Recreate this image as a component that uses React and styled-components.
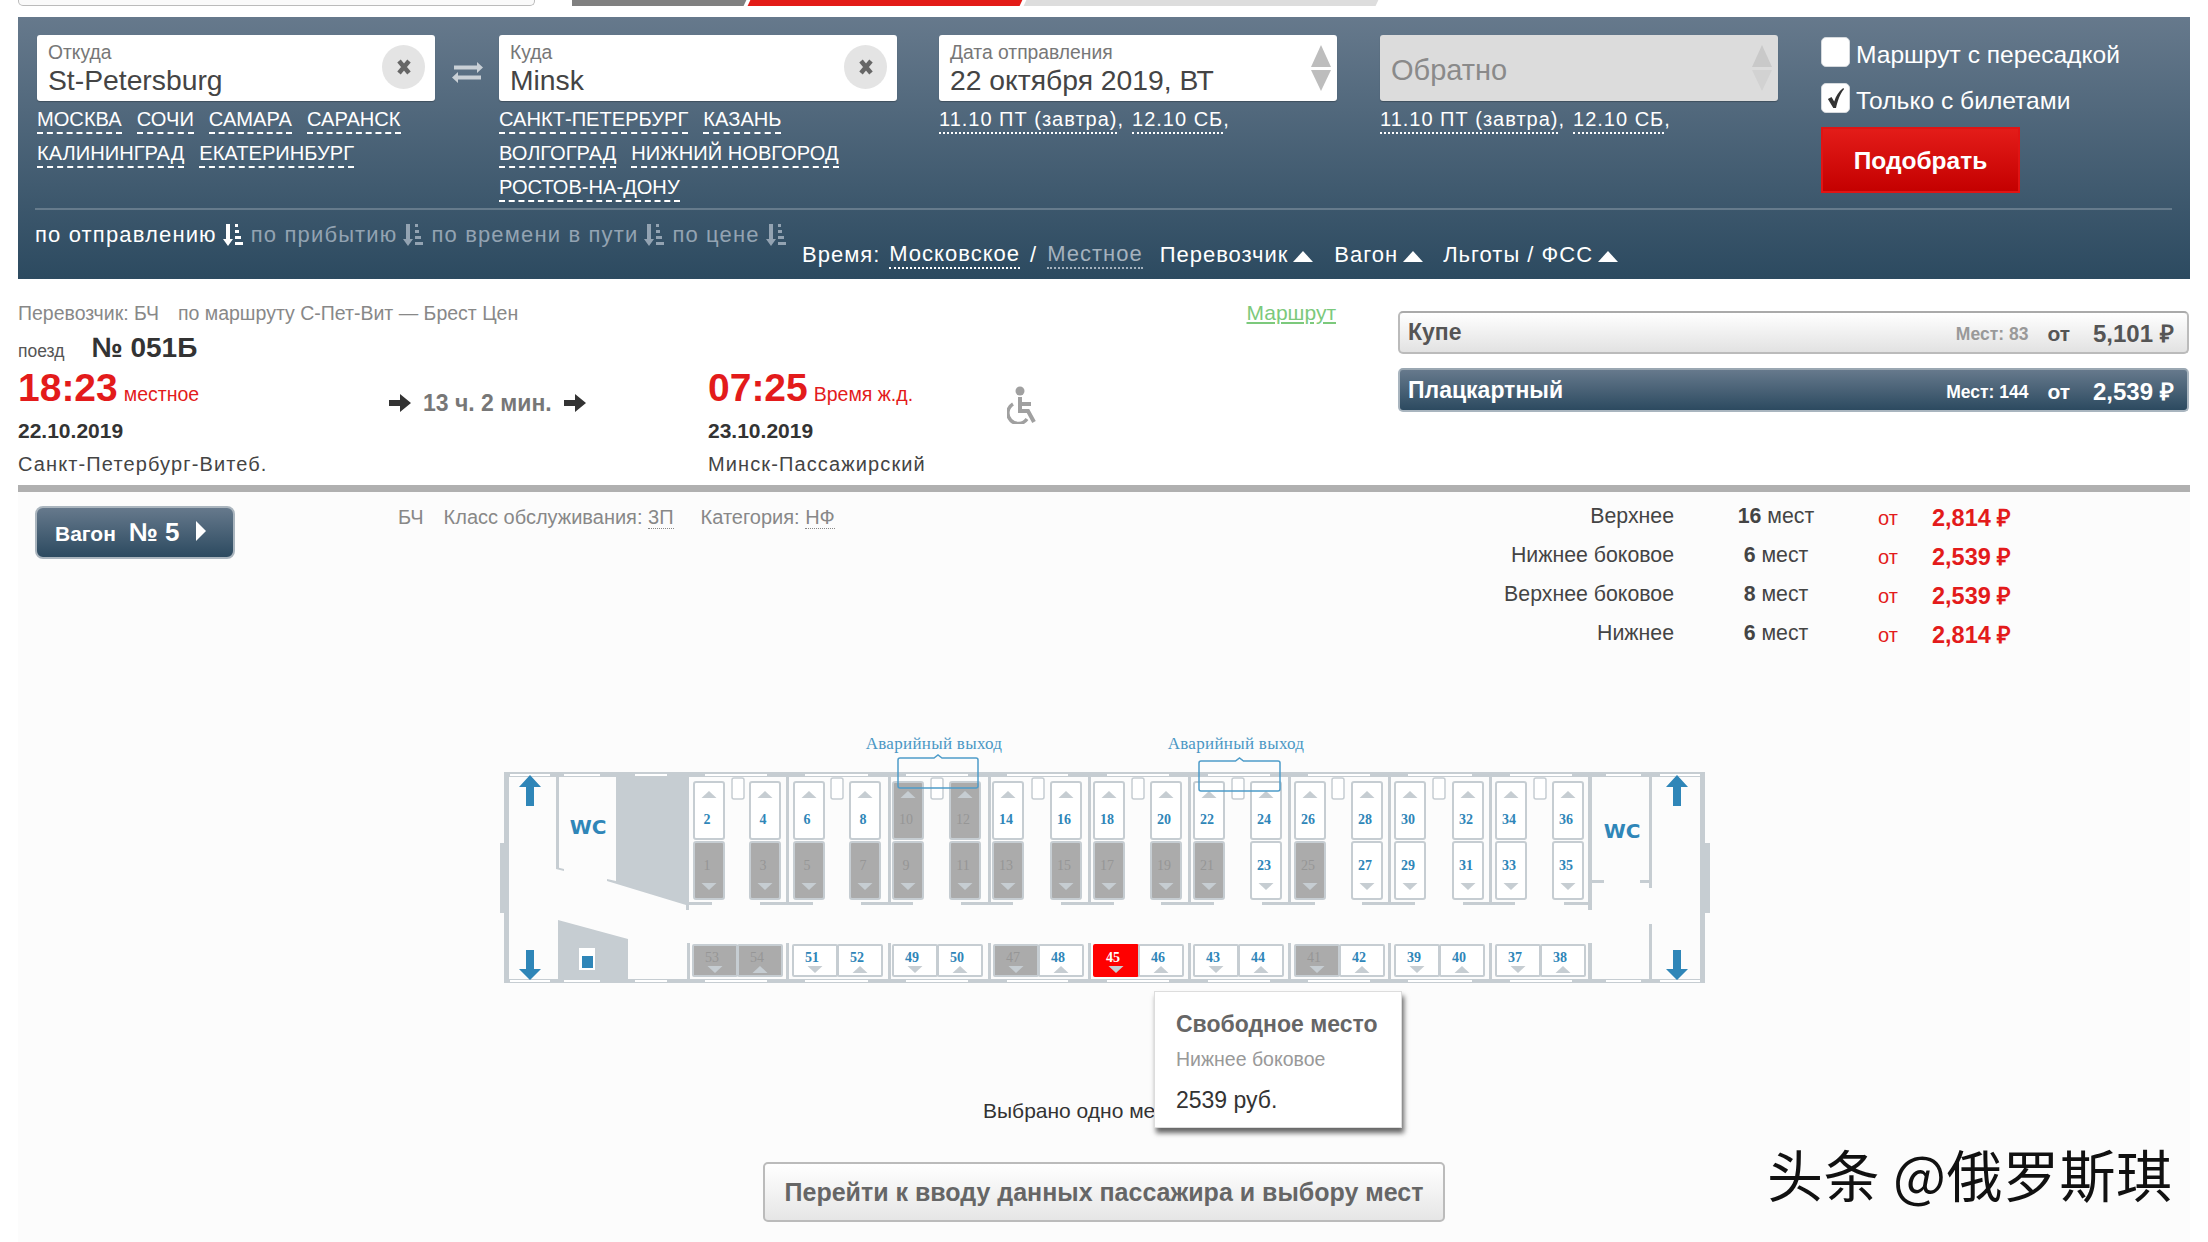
import React from "react";
import styled, { createGlobalStyle } from "styled-components";

const WALL = "#c6cdd2";
const BLUE = "#2f86b8";
const RED = "#e31b1b";

const GlobalStyle = createGlobalStyle`
  html, body {
    margin: 0;
    background: #fff;
    font-family: "Liberation Sans", Arial, sans-serif;
  }
`;

const Page = styled.div`
  position: relative;
  width: 2208px;
  height: 1242px;
  overflow: hidden;
`;

/* обрезанная шапка сверху */
const TopStrip = styled.div`
  display: flex;
  height: 17px;
  padding-left: 18px;
`;

const InputStub = styled.div`
  width: 515px;
  height: 5px;
  background: #fafafa;
  border: 1px solid #bbb;
  border-top: 0;
  border-radius: 0 0 5px 5px;
`;

const Progress = styled.div`
  display: flex;
  gap: 4px;
  width: 810px;
  height: 6px;
  margin-left: 37px;
  overflow: hidden;
`;

const ProgressPart = styled.div`
  flex: none;
  width: ${(p) => p.$w}px;
  margin-left: ${(p) => p.$ml ?? 0}px;
  background: ${(p) => p.$c};
  transform: skewX(-25deg);
`;

const SearchPanel = styled.div`
  margin: 0 18px;
  height: 262px;
  box-sizing: border-box;
  padding: 18px 18px 0 19px;
  background: linear-gradient(#66798c, #2c4a60);
  color: #fff;
`;

const FormRow = styled.div`
  display: flex;
  height: 173px;
`;

const FieldColumn = styled.div`
  width: 398px;
  margin-right: ${(p) => p.$gap}px;
`;

const Field = styled.div`
  position: relative;
  height: 66px;
  box-sizing: border-box;
  padding: 8px 11px 0;
  background: ${(p) => (p.$disabled ? "#dcdcdc" : "#fff")};
  border-radius: 3px;
  box-shadow: 0 1px 1px rgba(0, 0, 0, 0.25);
`;

const FieldLabel = styled.div`
  font-size: 19.3px;
  line-height: 20px;
  color: #777;
`;

const FieldValue = styled.div`
  font-size: 28.3px;
  line-height: 34px;
  color: #444;
`;

const FieldPlaceholder = styled.div`
  padding-top: 10px;
  font-size: 29px;
  line-height: 34px;
  color: #8a8a8a;
`;

const ClearButton = styled.div`
  position: absolute;
  right: 10px;
  top: 10px;
  width: 43px;
  height: 44px;
  display: flex;
  align-items: center;
  justify-content: center;
  border-radius: 50%;
  background: #e4e4e4;
`;

const Spinner = styled.svg`
  position: absolute;
  right: 4px;
  top: 10px;
`;

const SwapBox = styled.div`
  width: 64px;
  height: 66px;
  display: flex;
  align-items: center;
  justify-content: center;
  padding-top: 8px;
  box-sizing: border-box;
`;

const Hints = styled.div`
  display: flex;
  flex-wrap: wrap;
  column-gap: ${(p) => p.$gap ?? 15}px;
  padding-top: 5px;
`;

const CityLink = styled.span`
  height: 28px;
  margin-bottom: 6px;
  font-size: 20.1px;
  line-height: 26px;
  color: #fff;
  border-bottom: 2px dashed #fff;
  box-sizing: border-box;
`;

const DateHint = styled.span`
  font-size: 20px;
  line-height: 26px;
  letter-spacing: 1px;
  color: #fff;
`;

const DateLink = styled.span`
  border-bottom: 2px dotted #fff;
  padding-bottom: 2px;
`;

const Options = styled.div`
  display: flex;
  flex-direction: column;
  align-items: flex-start;
  padding-top: 2px;
`;

const OptionRow = styled.label`
  display: flex;
  align-items: center;
  gap: 6px;
  height: 30px;
  margin-bottom: 16px;
  font-size: 24.6px;
  color: #fff;
`;

const OptionText = styled.span`
  margin-top: 5px;
`;

const CheckBox = styled.span`
  display: flex;
  align-items: center;
  justify-content: center;
  width: 29px;
  height: 30px;
  background: #fff;
  border: 1px solid #d5d9dd;
  box-sizing: border-box;
  border-radius: 5px;
`;

const SubmitButton = styled.div`
  width: 199px;
  height: 66px;
  margin-top: -2px;
  padding-top: 2px;
  display: flex;
  align-items: center;
  justify-content: center;
  box-sizing: border-box;
  border: 2px solid #e01414;
  background: linear-gradient(#e31c19, #c40000);
  color: #fff;
  font-size: 24.5px;
  font-weight: bold;
`;

const Divider = styled.div`
  height: 2px;
  margin-left: -2px;
  background: rgba(255, 255, 255, 0.22);
`;

const SortRow = styled.div`
  display: flex;
  height: 69px;
`;

const SortList = styled.div`
  display: flex;
  align-items: flex-start;
  gap: 8px;
  width: 767px;
  margin-left: -2px;
  padding-top: 12px;
`;

const SortItem = styled.span`
  display: flex;
  align-items: center;
  gap: 6px;
  font-size: 22px;
  line-height: 26px;
  letter-spacing: 1.15px;
  color: ${(p) => (p.$active ? "#fff" : "#93a3b2")};
`;

const FilterList = styled.div`
  display: flex;
  align-items: center;
  height: 26px;
  margin-top: 32px;
  font-size: 22px;
  letter-spacing: 1px;
  color: #fff;
`;

const TimeLink = styled.span`
  margin-left: ${(p) => p.$ml ?? 0}px;
  color: ${(p) => (p.$dim ? "#a5b2be" : "#fff")};
  border-bottom: 2px dotted ${(p) => (p.$dim ? "#a5b2be" : "#fff")};
`;

const Slash = styled.span`
  margin: 0 10px;
`;

const FilterItem = styled.span`
  display: flex;
  align-items: center;
  gap: 5px;
  margin-left: ${(p) => p.$ml}px;
`;

const TriangleUp = styled.i`
  display: block;
  width: 0;
  height: 0;
  margin-top: 3px;
  border-left: 10px solid transparent;
  border-right: 10px solid transparent;
  border-bottom: 11px solid #fff;
`;

/* поезд */
const TrainSection = styled.div`
  display: flex;
  height: 206px;
  margin: 0 18px;
  padding-top: 22px;
  box-sizing: border-box;
`;

const TrainInfo = styled.div`
  width: 1318px;
  margin-right: 62px;
`;

const CarrierRow = styled.div`
  display: flex;
  justify-content: space-between;
  height: 24px;
  font-size: 19.5px;
  line-height: 24px;
  color: #888;
`;

const CarrierParts = styled.div`
  display: flex;
  gap: 19px;
`;

const RouteLink = styled.a`
  font-size: 21px;
  color: #7cc97c;
  text-decoration: underline;
`;

const TrainNo = styled.div`
  display: flex;
  align-items: baseline;
  margin-top: 7px;
  height: 34px;
  font-size: 17.5px;
  color: #555;
`;

const TrainNoValue = styled.b`
  margin-left: 27px;
  font-size: 28px;
  color: #333;
`;

const TrainTimes = styled.div`
  display: grid;
  grid-template-columns: 371px 319px 299px auto;
`;

const TimeColumn = styled.div`
  display: flex;
  flex-direction: column;
`;

const TimeLine = styled.div`
  display: flex;
  align-items: baseline;
  gap: 6px;
  height: 44px;
`;

const TimeValue = styled.b`
  font-size: 39px;
  line-height: 44px;
  color: ${RED};
`;

const TimeZone = styled.span`
  font-size: 19.5px;
  color: ${RED};
`;

const DateValue = styled.b`
  margin-top: 9px;
  font-size: 21px;
  line-height: 24px;
  color: #333;
`;

const Station = styled.div`
  margin-top: 9px;
  font-size: 20px;
  line-height: 24px;
  letter-spacing: 1.12px;
  color: #444;
`;

const Duration = styled.div`
  display: flex;
  align-items: center;
  gap: 12px;
  height: 28px;
  margin-top: 23px;
  font-size: 23px;
  font-weight: bold;
  color: #777;
`;

const WheelchairIcon = styled.svg`
  margin-top: 20px;
`;

const ClassList = styled.div`
  display: flex;
  flex-direction: column;
  gap: 14px;
  width: 791px;
  padding-top: 10px;
`;

const ClassButton = styled.div`
  display: flex;
  align-items: center;
  height: ${(p) => (p.$active ? 44 : 43)}px;
  box-sizing: border-box;
  padding: 0 10px 0 8px;
  border: 2px solid ${(p) => (p.$active ? "#a9b5bf" : "#bbb")};
  border-top-color: ${(p) => (p.$active ? "#9aa7b2" : "#aaa")};
  border-radius: 5px;
  background: ${(p) =>
    p.$active
      ? "linear-gradient(#66798c, #2c4a60)"
      : "linear-gradient(#fff, #e2e2e2)"};
  color: ${(p) => (p.$active ? "#fff" : "#555")};
`;

const ClassName = styled.b`
  flex: 1;
  font-size: 23px;
`;

const ClassSeats = styled.b`
  margin-top: 4px;
  font-size: 17.5px;
  color: ${(p) => (p.$active ? "#fff" : "#999")};
`;

const ClassFrom = styled.b`
  margin: 3px 0 0 19px;
  font-size: 21px;
`;

const ClassPrice = styled.b`
  width: 84px;
  margin: 0 0 0 23px;
  font-size: 24px;
  white-space: nowrap;
`;

const GrayRule = styled.div`
  height: 7px;
  margin: 0 18px;
  background: #b0b0b0;
`;

/* вагон */
const WagonPane = styled.div`
  position: relative;
  height: 750px;
  margin: 0 18px;
  background: #fcfcfc;
`;

const WagonHead = styled.div`
  display: flex;
  height: 228px;
  box-sizing: border-box;
  padding: 14px 0 0 17px;
`;

const WagonButton = styled.div`
  display: flex;
  align-items: center;
  width: 200px;
  height: 53px;
  box-sizing: border-box;
  padding-left: 18px;
  border: 2px solid #aab5be;
  border-radius: 8px;
  background: linear-gradient(#66798c, #2c4a60);
  color: #fff;
  font-weight: bold;
`;

const WagonWord = styled.span`
  margin-top: 3px;
  font-size: 21px;
`;

const WagonNo = styled.span`
  margin-left: 13px;
  font-size: 26px;
`;

const WagonCaret = styled.i`
  display: block;
  width: 0;
  height: 0;
  margin: -4px 0 0 16px;
  border-top: 10px solid transparent;
  border-bottom: 10px solid transparent;
  border-left: 10px solid #fff;
`;

const WagonMeta = styled.div`
  display: flex;
  margin: -1px 0 0 163px;
  height: 24px;
  font-size: 20px;
  line-height: 24px;
  color: #888;
`;

const MetaItem = styled.span`
  margin-left: ${(p) => p.$ml ?? 0}px;
`;

const MetaCode = styled.span`
  border-bottom: 1px dotted #888;
`;

const PriceTable = styled.div`
  display: grid;
  grid-template-columns: 300px 204px 54px 100px;
  grid-auto-rows: 39px;
  align-items: center;
  margin: -9px 0 0 auto;
  padding-right: 158px;
  height: 156px;
`;

const BerthName = styled.div`
  text-align: right;
  font-size: 21.3px;
  color: #444;
`;

const BerthCount = styled.div`
  text-align: center;
  font-size: 21.3px;
  color: #444;
`;

const BerthFrom = styled.div`
  margin-top: 3px;
  font-size: 20px;
  color: ${RED};
`;

const BerthPrice = styled.b`
  font-size: 23.5px;
  white-space: nowrap;
  color: ${RED};
`;

const Schema = styled.svg`
  display: block;
  margin-left: 472px;
`;

const SeatNumber = styled.text`
  font-family: "Liberation Serif", "Times New Roman", serif;
  font-size: 14px;
  font-weight: ${(p) => (p.$taken ? "normal" : "bold")};
  text-anchor: middle;
  fill: ${(p) => (p.$taken ? "#969696" : p.$picked ? "#fff" : BLUE)};
`;

const ExitLabel = styled.text`
  font-family: "Liberation Serif", "Times New Roman", serif;
  font-size: 17px;
  letter-spacing: 0.3px;
  text-anchor: middle;
  fill: #4a97c4;
`;

const WcLabel = styled.text`
  font-family: "DejaVu Sans", sans-serif;
  font-size: 20px;
  font-weight: bold;
  text-anchor: middle;
  fill: ${BLUE};
`;

const SelectedNote = styled.div`
  position: absolute;
  left: 965px;
  top: 607px;
  font-size: 21px;
  line-height: 24px;
  color: #333;
`;

const SeatTooltip = styled.div`
  position: absolute;
  left: 1136px;
  top: 499px;
  width: 248px;
  height: 137px;
  box-sizing: border-box;
  padding: 18px 0 0 21px;
  background: #fff;
  border: 1px solid #ddd;
  box-shadow: 2px 5px 5px rgba(0, 0, 0, 0.6);
`;

const TipTitle = styled.div`
  font-size: 23px;
  line-height: 28px;
  font-weight: bold;
  color: #666;
`;

const TipKind = styled.div`
  margin-top: 10px;
  font-size: 19.5px;
  line-height: 22px;
  color: #999;
`;

const TipPrice = styled.div`
  margin-top: 17px;
  font-size: 23px;
  line-height: 26px;
  color: #333;
`;

const ProceedRow = styled.div`
  display: flex;
  padding-left: 745px;
`;

const ProceedButton = styled.div`
  display: flex;
  align-items: center;
  justify-content: center;
  width: 682px;
  height: 60px;
  margin-top: 162px;
  box-sizing: border-box;
  border: 2px solid #bbb;
  border-radius: 5px;
  background: linear-gradient(#fff, #e6e6e6);
  color: #666;
  font-size: 25px;
  font-weight: bold;
`;

const Watermark = styled.div`
  position: absolute;
  left: 1767px;
  top: 1135px;
  font-family: "Noto Sans CJK SC", sans-serif;
  font-size: 56px;
  line-height: 76px;
  letter-spacing: 0.5px;
  white-space: nowrap;
  color: #111;
`;

const SortIcon = () => (
  <svg width="20" height="22" viewBox="0 0 20 22" fill="currentColor">
    <path d="M3 0h4v15h3l-5 7-5-7h3z" />
    <path d="M12 0h3v3h-3zM12 6h4v3h-4zM12 12h6v3h-6zM12 18h8v3h-8z" />
  </svg>
);

const BoldArrow = () => (
  <svg width="22" height="18" viewBox="0 0 22 18" fill="#333">
    <path d="M0 6h11V0l11 9-11 9v-6H0z" />
  </svg>
);

const SwapIcon = () => (
  <svg width="31" height="21" viewBox="0 0 31 21" fill="#c9d0d6">
    <path d="M2 3.5h23V0l6 5.5-6 5.5V7.5H2z" />
    <path d="M29 13.5H6V10l-6 5.5L6 21v-3.5h23z" />
  </svg>
);

const ClearIcon = () => (
  <svg width="14" height="16" viewBox="0 0 14 16" stroke="#666" strokeWidth="4.5">
    <path d="M2 2l10 12M12 2L2 14" />
  </svg>
);

const CheckIcon = () => (
  <svg width="18" height="22" viewBox="0 0 20 24" fill="#333">
    <path d="M1 13l4-2 3 5C10 10 13 5 18 1l1 1c-5 6-7 13-9 21H7z" />
  </svg>
);

const SpinArrows = ({ faded }) => (
  <Spinner width="24" height="46" viewBox="0 0 24 46">
    <path d="M12 0l10 22H2z" fill={faded ? "#c9c9c9" : "#bdbdbd"} />
    <path d="M2 25h20L12 46z" fill={faded ? "#d2d2d2" : "#bdbdbd"} />
  </Spinner>
);

const Wheelchair = () => (
  <WheelchairIcon
    width="30"
    height="38"
    viewBox="16 11 30 38"
    fill="none"
    stroke="#a0a0a0"
    strokeWidth="4"
  >
    <circle cx="29" cy="16" r="4.5" fill="#a0a0a0" stroke="none" />
    <path d="M29 22V36H37L43 47" />
    <path d="M29 29h11" />
    <path d="M22 29a10.5 10.5 0 1 0 14 15" strokeWidth="3.5" />
  </WheelchairIcon>
);

/* схема вагона в координатах страницы */
const compartments = [
  [693, 2, 1], [749, 4, 3], [793, 6, 5], [849, 8, 7], [892, 10, 9],
  [949, 12, 11], [992, 14, 13], [1050, 16, 15], [1093, 18, 17],
  [1150, 20, 19], [1193, 22, 21], [1250, 24, 23], [1294, 26, 25],
  [1351, 28, 27], [1394, 30, 29], [1452, 32, 31], [1495, 34, 33],
  [1552, 36, 35],
];

const sidePairs = [
  [692, 53, 54], [792, 51, 52], [892, 49, 50], [993, 47, 48],
  [1093, 45, 46], [1193, 43, 44], [1294, 41, 42], [1394, 39, 40],
  [1495, 37, 38],
];

const takenSeats = new Set([
  1, 3, 5, 7, 9, 10, 11, 12, 13, 15, 17, 19, 21, 25, 41, 47, 53, 54,
]);

const windowSpans = [
  [510, 550], [564, 600], [635, 667], [705, 767], [805, 868], [906, 968],
  [1007, 1068], [1107, 1169], [1208, 1270], [1308, 1370], [1408, 1472],
  [1510, 1572], [1606, 1641], [1660, 1700],
];

const partitions = [786, 888, 988, 1088, 1188, 1288, 1388, 1489];
const tables = [732, 831, 931, 1032, 1132, 1232, 1332, 1433, 1534];
const footBars = [
  [760, 53], [861, 52], [961, 52], [1061, 53], [1161, 53], [1262, 53],
  [1362, 53], [1463, 52], [1564, 24], [687, 25],
];

const Triangle = ({ cx, y, up, color = WALL }) => (
  <path
    d={up ? `M${cx} ${y}l7.5 7h-15z` : `M${cx - 7.5} ${y}h15l-7.5 7z`}
    fill={color}
  />
);

const Berth = ({ x, y, number, up }) => {
  const taken = takenSeats.has(number);
  return (
    <g>
      <rect
        x={x + 1}
        y={y + 1}
        width="30"
        height="57"
        rx="2"
        fill={taken ? "#ababab" : "#fff"}
        stroke={WALL}
        strokeWidth="2"
      />
      <Triangle cx={x + 16} y={up ? y + 10 : y + 42} up={up} />
      <SeatNumber x={x + 14} y={up ? y + 43 : y + 29} $taken={taken}>
        {number}
      </SeatNumber>
    </g>
  );
};

const SideSeat = ({ x, number, up }) => {
  const taken = takenSeats.has(number);
  const picked = number === 45;
  const fill = picked ? "#f00" : taken ? "#ababab" : "#fff";
  return (
    <g>
      <rect
        x={x + 1}
        y="945"
        width="44"
        height="31"
        rx="1"
        fill={fill}
        stroke={picked ? "#f00" : WALL}
        strokeWidth="2"
      />
      <Triangle cx={x + 23} y={966} up={up} />
      <SeatNumber x={x + 20} y={962} $taken={taken} $picked={picked}>
        {number}
      </SeatNumber>
    </g>
  );
};

const ExitBox = ({ x, y, w }) => (
  <path
    d={`M${x + 2} ${y}H${x + w / 2 - 4}l4 -3 4 3H${x + w - 2}q2 0 2 2v26q0 2 -2 2H${x + 2}q-2 0 -2 -2v-26q0 -2 2 -2z`}
    fill="none"
    stroke="#4e9cc9"
    strokeWidth="1.5"
  />
);

const CarArrow = ({ cx, up }) =>
  up ? (
    <path d={`M${cx} 775l11 12h-7v19h-8v-19h-7z`} fill={BLUE} />
  ) : (
    <path d={`M${cx - 4} 950h8v19h7l-11 11-11-11h7z`} fill={BLUE} />
  );

const CarPlan = () => (
  <Schema width="1230" height="280" viewBox="490 720 1230 280">
    {/* стены */}
    <rect x="504" y="772" width="1201" height="5" fill={WALL} />
    <rect x="504" y="979" width="1201" height="4" fill={WALL} />
    <rect x="504" y="772" width="5" height="211" fill={WALL} />
    <rect x="1700" y="772" width="5" height="211" fill={WALL} />
    <rect x="500" y="843" width="5" height="70" fill={WALL} />
    <rect x="1704" y="843" width="6" height="70" fill={WALL} />
    {windowSpans.map(([a, b]) => (
      <g key={a}>
        <rect x={a} y="774" width={b - a} height="2" fill="#fff" />
        <rect x={a} y="980" width={b - a} height="2" fill="#fff" />
      </g>
    ))}

    {/* левый тамбур */}
    <rect x="556" y="777" width="3" height="91" fill={WALL} />
    <path d="M556 867l8 2v2l-8-2z" fill={WALL} />
    <path d="M616 777h73v128h-3l-79-24v-2l9 2z" fill={WALL} />
    <rect x="686" y="902" width="26" height="3" fill={WALL} />
    <rect x="686" y="905" width="3" height="5" fill={WALL} />
    <path d="M558 920l70 19v40h-70z" fill={WALL} />
    <rect x="579" y="948" width="16" height="22" fill="#fff" />
    <rect x="582" y="956" width="11" height="12" fill={BLUE} />
    <WcLabel x="588" y="834">WC</WcLabel>
    <CarArrow cx={530} up />
    <CarArrow cx={530} />

    {/* правый тамбур */}
    <rect x="1588" y="777" width="4" height="133" fill={WALL} />
    <rect x="1592" y="880" width="12" height="3" fill={WALL} />
    <rect x="1640" y="880" width="10" height="3" fill={WALL} />
    <rect x="1649" y="777" width="3" height="111" fill={WALL} />
    <rect x="1649" y="924" width="3" height="55" fill={WALL} />
    <WcLabel x="1622" y="838">WC</WcLabel>
    <CarArrow cx={1677} up />
    <CarArrow cx={1677} />

    {/* купе */}
    {partitions.map((x) => (
      <g key={x}>
        <rect x={x} y="777" width="3" height="126" fill={WALL} />
        <rect x={x} y="943" width="3" height="36" fill={WALL} />
      </g>
    ))}
    <rect x="687" y="943" width="3" height="36" fill={WALL} />
    <rect x="1588" y="943" width="4" height="36" fill={WALL} />
    {footBars.map(([x, w]) => (
      <rect key={x} x={x} y="902" width={w} height="3" fill={WALL} />
    ))}
    {tables.map((x) => (
      <rect
        key={x}
        x={x}
        y="778"
        width="12"
        height="21"
        rx="2"
        fill="#fff"
        stroke={WALL}
        strokeWidth="1.5"
      />
    ))}
    {compartments.map(([x, top, bottom]) => (
      <g key={x}>
        <Berth x={x} y={781} number={top} up />
        <Berth x={x} y={841} number={bottom} />
      </g>
    ))}
    {sidePairs.map(([x, left, right]) => (
      <g key={x}>
        <SideSeat x={x} number={left} />
        <SideSeat x={x + 45} number={right} up />
      </g>
    ))}

    {/* аварийные выходы */}
    <ExitLabel x="934" y="749">Аварийный выход</ExitLabel>
    <ExitLabel x="1236" y="749">Аварийный выход</ExitLabel>
    <ExitBox x={898} y={758} w={80} />
    <ExitBox x={1199} y={761} w={81} />
  </Schema>
);

const priceRows = [
  ["Верхнее", "16", "2,814 ₽"],
  ["Нижнее боковое", "6", "2,539 ₽"],
  ["Верхнее боковое", "8", "2,539 ₽"],
  ["Нижнее", "6", "2,814 ₽"],
];

export default function App() {
  return (
    <Page>
      <GlobalStyle />
      <TopStrip>
        <InputStub />
        <Progress>
          <ProgressPart $w={176} $ml={-3} $c="#808080" />
          <ProgressPart $w={272} $c="#e31b17" />
          <ProgressPart $w={352} $c="#dddddd" />
        </Progress>
      </TopStrip>

      <SearchPanel>
        <FormRow>
          <FieldColumn>
            <Field>
              <FieldLabel>Откуда</FieldLabel>
              <FieldValue>St-Petersburg</FieldValue>
              <ClearButton>
                <ClearIcon />
              </ClearButton>
            </Field>
            <Hints>
              <CityLink>МОСКВА</CityLink>
              <CityLink>СОЧИ</CityLink>
              <CityLink>САМАРА</CityLink>
              <CityLink>САРАНСК</CityLink>
              <CityLink>КАЛИНИНГРАД</CityLink>
              <CityLink>ЕКАТЕРИНБУРГ</CityLink>
            </Hints>
          </FieldColumn>
          <SwapBox>
            <SwapIcon />
          </SwapBox>
          <FieldColumn $gap={42}>
            <Field>
              <FieldLabel>Куда</FieldLabel>
              <FieldValue>Minsk</FieldValue>
              <ClearButton>
                <ClearIcon />
              </ClearButton>
            </Field>
            <Hints>
              <CityLink>САНКТ-ПЕТЕРБУРГ</CityLink>
              <CityLink>КАЗАНЬ</CityLink>
              <CityLink>ВОЛГОГРАД</CityLink>
              <CityLink>НИЖНИЙ НОВГОРОД</CityLink>
              <CityLink>РОСТОВ-НА-ДОНУ</CityLink>
            </Hints>
          </FieldColumn>
          <FieldColumn $gap={43}>
            <Field>
              <FieldLabel>Дата отправления</FieldLabel>
              <FieldValue>22 октября 2019, ВТ</FieldValue>
              <SpinArrows />
            </Field>
            <Hints $gap={8}>
              <DateHint>
                <DateLink>11.10 ПТ (завтра)</DateLink>,
              </DateHint>
              <DateHint>
                <DateLink>12.10 СБ</DateLink>,
              </DateHint>
            </Hints>
          </FieldColumn>
          <FieldColumn $gap={43}>
            <Field $disabled>
              <FieldPlaceholder>Обратно</FieldPlaceholder>
              <SpinArrows faded />
            </Field>
            <Hints $gap={8}>
              <DateHint>
                <DateLink>11.10 ПТ (завтра)</DateLink>,
              </DateHint>
              <DateHint>
                <DateLink>12.10 СБ</DateLink>,
              </DateHint>
            </Hints>
          </FieldColumn>
          <Options>
            <OptionRow>
              <CheckBox />
              <OptionText>Маршрут с пересадкой</OptionText>
            </OptionRow>
            <OptionRow>
              <CheckBox>
                <CheckIcon />
              </CheckBox>
              <OptionText>Только с билетами</OptionText>
            </OptionRow>
            <SubmitButton>Подобрать</SubmitButton>
          </Options>
        </FormRow>
        <Divider />
        <SortRow>
          <SortList>
            <SortItem $active>
              по отправлению
              <SortIcon />
            </SortItem>
            <SortItem>
              по прибытию
              <SortIcon />
            </SortItem>
            <SortItem>
              по времени в пути
              <SortIcon />
            </SortItem>
            <SortItem>
              по цене
              <SortIcon />
            </SortItem>
          </SortList>
          <FilterList>
            Время:
            <TimeLink $ml={9}>Московское</TimeLink>
            <Slash>/</Slash>
            <TimeLink $dim>Местное</TimeLink>
            <FilterItem $ml={17}>
              Перевозчик
              <TriangleUp />
            </FilterItem>
            <FilterItem $ml={21}>
              Вагон
              <TriangleUp />
            </FilterItem>
            <FilterItem $ml={20}>
              Льготы / ФСС
              <TriangleUp />
            </FilterItem>
          </FilterList>
        </SortRow>
      </SearchPanel>

      <TrainSection>
        <TrainInfo>
          <CarrierRow>
            <CarrierParts>
              <span>Перевозчик: БЧ</span>
              <span>по маршруту С-Пет-Вит — Брест Цен</span>
            </CarrierParts>
            <RouteLink>Маршрут</RouteLink>
          </CarrierRow>
          <TrainNo>
            поезд
            <TrainNoValue>№ 051Б</TrainNoValue>
          </TrainNo>
          <TrainTimes>
            <TimeColumn>
              <TimeLine>
                <TimeValue>18:23</TimeValue>
                <TimeZone>местное</TimeZone>
              </TimeLine>
              <DateValue>22.10.2019</DateValue>
              <Station>Санкт-Петербург-Витеб.</Station>
            </TimeColumn>
            <Duration>
              <BoldArrow />
              13 ч. 2 мин.
              <BoldArrow />
            </Duration>
            <TimeColumn>
              <TimeLine>
                <TimeValue>07:25</TimeValue>
                <TimeZone>Время ж.д.</TimeZone>
              </TimeLine>
              <DateValue>23.10.2019</DateValue>
              <Station>Минск-Пассажирский</Station>
            </TimeColumn>
            <Wheelchair />
          </TrainTimes>
        </TrainInfo>
        <ClassList>
          <ClassButton>
            <ClassName>Купе</ClassName>
            <ClassSeats>Мест: 83</ClassSeats>
            <ClassFrom>от</ClassFrom>
            <ClassPrice>5,101 ₽</ClassPrice>
          </ClassButton>
          <ClassButton $active>
            <ClassName>Плацкартный</ClassName>
            <ClassSeats $active>Мест: 144</ClassSeats>
            <ClassFrom>от</ClassFrom>
            <ClassPrice>2,539 ₽</ClassPrice>
          </ClassButton>
        </ClassList>
      </TrainSection>

      <GrayRule />

      <WagonPane>
        <WagonHead>
          <WagonButton>
            <WagonWord>Вагон</WagonWord>
            <WagonNo>№ 5</WagonNo>
            <WagonCaret />
          </WagonButton>
          <WagonMeta>
            <MetaItem>БЧ</MetaItem>
            <MetaItem $ml={20}>
              Класс обслуживания: <MetaCode>3П</MetaCode>
            </MetaItem>
            <MetaItem $ml={27}>
              Категория: <MetaCode>НФ</MetaCode>
            </MetaItem>
          </WagonMeta>
          <PriceTable>
            {priceRows.map(([name, count, price]) => (
              <React.Fragment key={name}>
                <BerthName>{name}</BerthName>
                <BerthCount>
                  <b>{count}</b> мест
                </BerthCount>
                <BerthFrom>от</BerthFrom>
                <BerthPrice>{price}</BerthPrice>
              </React.Fragment>
            ))}
          </PriceTable>
        </WagonHead>
        <CarPlan />
        <SelectedNote>Выбрано одно место</SelectedNote>
        <SeatTooltip>
          <TipTitle>Свободное место</TipTitle>
          <TipKind>Нижнее боковое</TipKind>
          <TipPrice>2539 руб.</TipPrice>
        </SeatTooltip>
        <ProceedRow>
          <ProceedButton>Перейти к вводу данных пассажира и выбору мест</ProceedButton>
        </ProceedRow>
      </WagonPane>

      <Watermark>头条 @俄罗斯琪</Watermark>
    </Page>
  );
}
